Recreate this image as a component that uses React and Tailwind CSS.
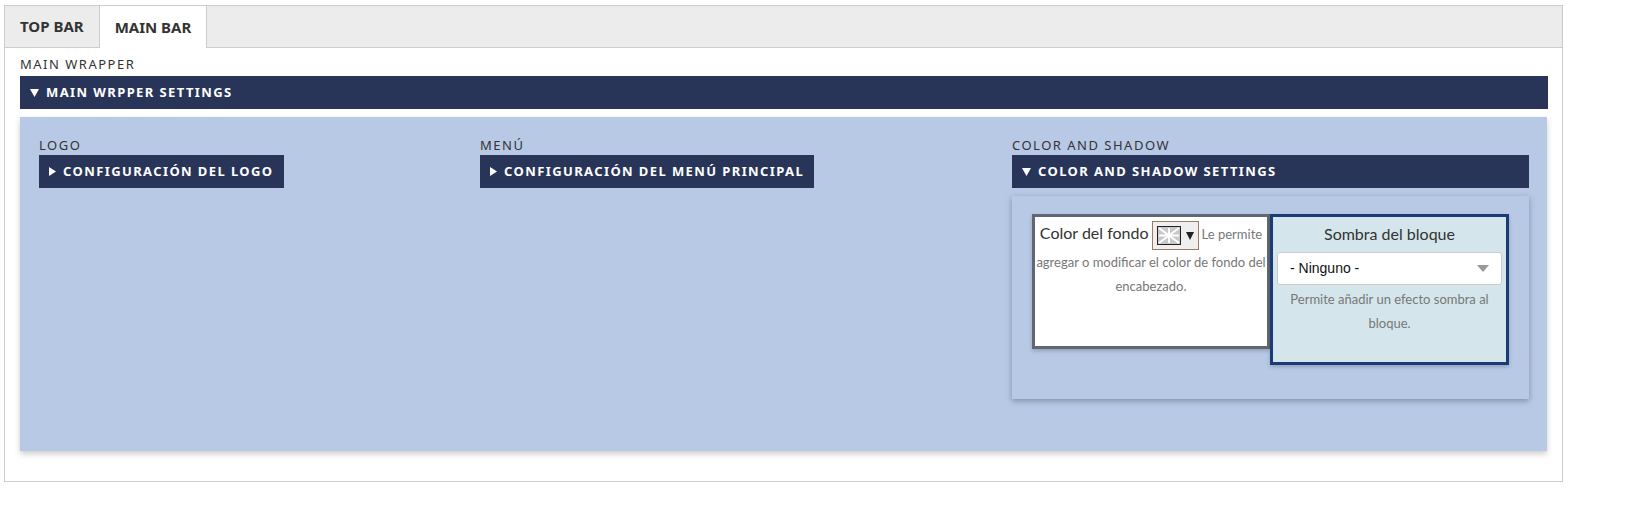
const HEAD = { fontFamily: '"Noto Sans", "Open Sans", sans-serif' }
const BODY = { fontFamily: 'Lato, "Open Sans", sans-serif' }

function SectionLabel({ children }) {
  return (
    <div className="text-[13px] leading-[15px] tracking-[1.5px] text-[#333]" style={HEAD}>
      {children}
    </div>
  )
}

function Arrow({ open }) {
  return open ? (
    <svg width="9" height="8" viewBox="0 0 9 8">
      <path d="M0 0H9L4.5 8Z" fill="#fff" />
    </svg>
  ) : (
    <svg width="7" height="9" viewBox="0 0 7 9">
      <path d="M0 0L7 4.5L0 9Z" fill="#fff" />
    </svg>
  )
}

function Toggle({ open, full, children }) {
  return (
    <div
      className={`${full ? 'flex' : 'inline-flex'} h-[33px] items-center gap-[7px] bg-[#293558] px-[10px] text-[13px] font-bold tracking-[1.4px] text-white`}
      style={HEAD}
    >
      <Arrow open={open} />
      <span>{children}</span>
    </div>
  )
}

// empty colour picker: crossed-out swatch + dropdown caret
function Swatch() {
  return (
    <span className="mx-[3px] inline-flex h-[29px] w-[47px] items-center gap-[5px] border border-[#9c7c64] bg-[#efefef] px-[4px] align-middle">
      <svg width="24" height="19" viewBox="0 0 24 19">
        <rect x="0.5" y="0.5" width="23" height="18" fill="#c8c8c8" stroke="#222" />
        <path d="M2 2L22 17M22 2L2 17M12 2V17M2 9.5H22" stroke="#fff" strokeWidth="2" />
      </svg>
      <svg width="8" height="8" viewBox="0 0 8 8">
        <path d="M0 0H8L4 8Z" fill="#222" />
      </svg>
    </span>
  )
}

export default function App() {
  return (
    <div className="bg-white px-[4px] pt-[5px]">
      <div className="w-[1559px] border border-[#ccc]">
        <div className="flex h-[42px] border-b border-[#ccc] bg-[#ececec] text-[15px] font-bold text-[#333]" style={HEAD}>
          <div className="flex items-center px-[15px]">TOP BAR</div>
          <div className="-mb-px flex items-center border-x border-[#ccc] bg-white px-[15px]">MAIN BAR</div>
        </div>

        <div className="px-[15px] pt-[9px] pb-[30px]">
          <SectionLabel>MAIN WRAPPER</SectionLabel>
          <div className="mt-[4px] mr-[-1px]">
            <Toggle open full>MAIN WRPPER SETTINGS</Toggle>
          </div>

          <div className="mt-[8px] h-[334px] bg-[#b8c9e6] px-[19px] pt-[21px] shadow-[0_3px_6px_rgba(0,0,0,0.2)]">
            <div className="grid grid-cols-[441px_532px_1fr]">
              <div>
                <SectionLabel>LOGO</SectionLabel>
                <div className="mt-[2px]">
                  <Toggle>CONFIGURACIÓN DEL LOGO</Toggle>
                </div>
              </div>
              <div>
                <SectionLabel>MENÚ</SectionLabel>
                <div className="mt-[2px]">
                  <Toggle>CONFIGURACIÓN DEL MENÚ PRINCIPAL</Toggle>
                </div>
              </div>
              <div>
                <SectionLabel>COLOR AND SHADOW</SectionLabel>
                <div className="mt-[2px]">
                  <Toggle open full>COLOR AND SHADOW SETTINGS</Toggle>
                </div>
                <div className="mt-[8px] h-[203px] bg-[#b8c9e6] px-[20px] pt-[18px] shadow-[0_2px_6px_rgba(0,0,0,0.3)]">
                  <div className="flex items-start" style={BODY}>
                    <div className="h-[135px] w-[238px] border-[3px] border-[#626873] bg-white px-[1px] pt-[4px] text-center shadow-[0_2px_4px_rgba(0,0,0,0.2)]">
                      <div className="text-[13px] leading-[24px] text-[#777]">
                        <span className="text-[16px] text-[#333]">Color del fondo</span>
                        <Swatch />
                        Le permite agregar o modificar el color de fondo del encabezado.
                      </div>
                    </div>
                    <div className="h-[151px] w-[239px] border-[3px] border-[#1b3a78] bg-[#d4e6eb] px-[4px] pt-[6px] text-center shadow-[0_2px_4px_rgba(0,0,0,0.2)]">
                      <div className="text-[16px] leading-[22px] text-[#333]">Sombra del bloque</div>
                      <div className="mt-[7px] flex h-[33px] items-center justify-between rounded-[3px] border border-[#ccc] bg-white pr-[12px] pl-[12px] text-[14px] text-[#111]" style={{ fontFamily: '"Liberation Sans", Arial, sans-serif' }}>
                        <span>- Ninguno -</span>
                        <svg width="12" height="7" viewBox="0 0 12 7">
                          <path d="M0 0H12L6 7Z" fill="#999" />
                        </svg>
                      </div>
                      <div className="mt-[2px] text-[13px] leading-[24px] text-[#777]">
                        Permite añadir un efecto sombra al bloque.
                      </div>
                    </div>
                  </div>
                </div>
              </div>
            </div>
          </div>
        </div>
      </div>
    </div>
  )
}
